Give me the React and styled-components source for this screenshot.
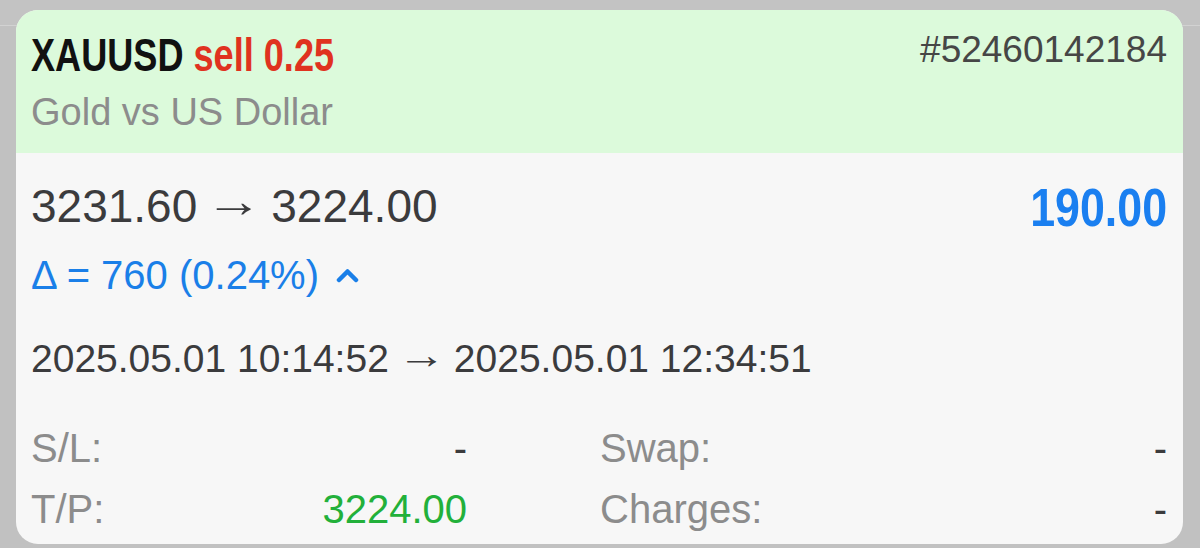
import React from "react";
import styled, { createGlobalStyle } from "styled-components";

/* page */

const Global = createGlobalStyle`
html, body {margin: 0; padding: 0;}
body {
  background: linear-gradient(#c3c3c3 0 25px, #d2d2d2 25px 26px, #c1c1c1 26px);
  font-family: "Liberation Sans", Arial, Helvetica, sans-serif;
}
`

const Page = styled.div`
padding: 10px 17px 4px 16px;
`

const Card = styled.section`
height: 534px;
border-radius: 22px;
overflow: hidden;
display: flex;
flex-direction: column;
background: #f7f7f7;
`

/* header */

const Header = styled.header`
height: 143px;
box-sizing: border-box;
background: #dcfadb;
padding: 21px 16px 0 15px;
`

const HeadRow = styled.div`
display: flex;
justify-content: space-between;
align-items: flex-start;
`

// condensed bold look: no narrow face installed, so squeeze Liberation Sans Bold
const Condensed = styled.div`
font-family: "Liberation Sans", Arial, sans-serif;
font-weight: 700;
line-height: 1;
white-space: nowrap;
transform: scaleX(${p => p.squeeze});
transform-origin: ${p => p.origin} center;
`

const Symbol = styled(Condensed)`
margin-top: 1px;
font-size: 46px;
color: #111;
`

const Side = styled.span`
color: #e0321f;
`

const Ticket = styled.div`
font-size: 37px;
line-height: 1;
color: #464646;
`

const Desc = styled.div`
margin-top: 15px;
font-size: 38px;
line-height: 1;
color: #8c8c8c;
`

/* body */

const Body = styled.div`
flex: 1;
padding: 25px 16px 0 15px;
`

const PriceRow = styled.div`
display: flex;
justify-content: space-between;
align-items: flex-start;
`

const Prices = styled.div`
font-size: 46px;
line-height: 1;
color: #3b3b3d;
`

const Arrow = styled.span`
display: inline-block;
margin: 0 ${p => p.space}px;
vertical-align: ${p => p.lift}px;
transform: scaleX(1.25);
`

const Profit = styled(Condensed)`
margin-top: 3px;
font-size: 53px;
color: ${p => p.positive ? "#1a7ff0" : "#e0321f"};
`

const Delta = styled.div`
margin-top: 21px;
display: flex;
align-items: center;
gap: 17px;
font-size: 40px;
line-height: 1;
color: #1a7fe8;
`

const Times = styled.div`
margin-top: 40px;
font-size: 39px;
line-height: 1;
color: #3b3b3d;
`

const Stats = styled.div`
margin-top: 50px;
display: grid;
grid-template-columns: 436px 1fr;
column-gap: 133px;
row-gap: 21px;
`

const Stat = styled.div`
display: flex;
justify-content: space-between;
font-size: 40px;
line-height: 1;
`

const Label = styled.span`
color: #8c8c8c;
`

const Value = styled.span`
color: ${p => p.color || "#3b3b3d"};
`

const Chevron = () => (
  <svg width="23" height="16" viewBox="0 0 23 16">
    <path d="M3 13 L11.5 4.5 L20 13" fill="none" stroke="#1a7fe8" strokeWidth="4.5" strokeLinecap="round" strokeLinejoin="round" />
  </svg>
);

const stats = [
  { label: "S/L:", value: "-" },
  { label: "Swap:", value: "-" },
  { label: "T/P:", value: "3224.00", color: "#22b03a" },
  { label: "Charges:", value: "-" },
];

export default function App() {
  return (
    <Page>
      <Global />
      <Card>
        <Header>
          <HeadRow>
            <Symbol squeeze={0.785} origin="left">XAUUSD <Side>sell 0.25</Side></Symbol>
            <Ticket>#52460142184</Ticket>
          </HeadRow>
          <Desc>Gold vs US Dollar</Desc>
        </Header>
        <Body>
          <PriceRow>
            <Prices>3231.60<Arrow space={14} lift={5}>→</Arrow>3224.00</Prices>
            <Profit positive squeeze={0.845} origin="right">190.00</Profit>
          </PriceRow>
          <Delta>
            <span>Δ = 760 (0.24%)</span>
            <Chevron />
          </Delta>
          <Times>2025.05.01 10:14:52<Arrow space={13} lift={4}>→</Arrow>2025.05.01 12:34:51</Times>
          <Stats>
            {stats.map(s => (
              <Stat key={s.label}>
                <Label>{s.label}</Label>
                <Value color={s.color}>{s.value}</Value>
              </Stat>
            ))}
          </Stats>
        </Body>
      </Card>
    </Page>
  );
}
